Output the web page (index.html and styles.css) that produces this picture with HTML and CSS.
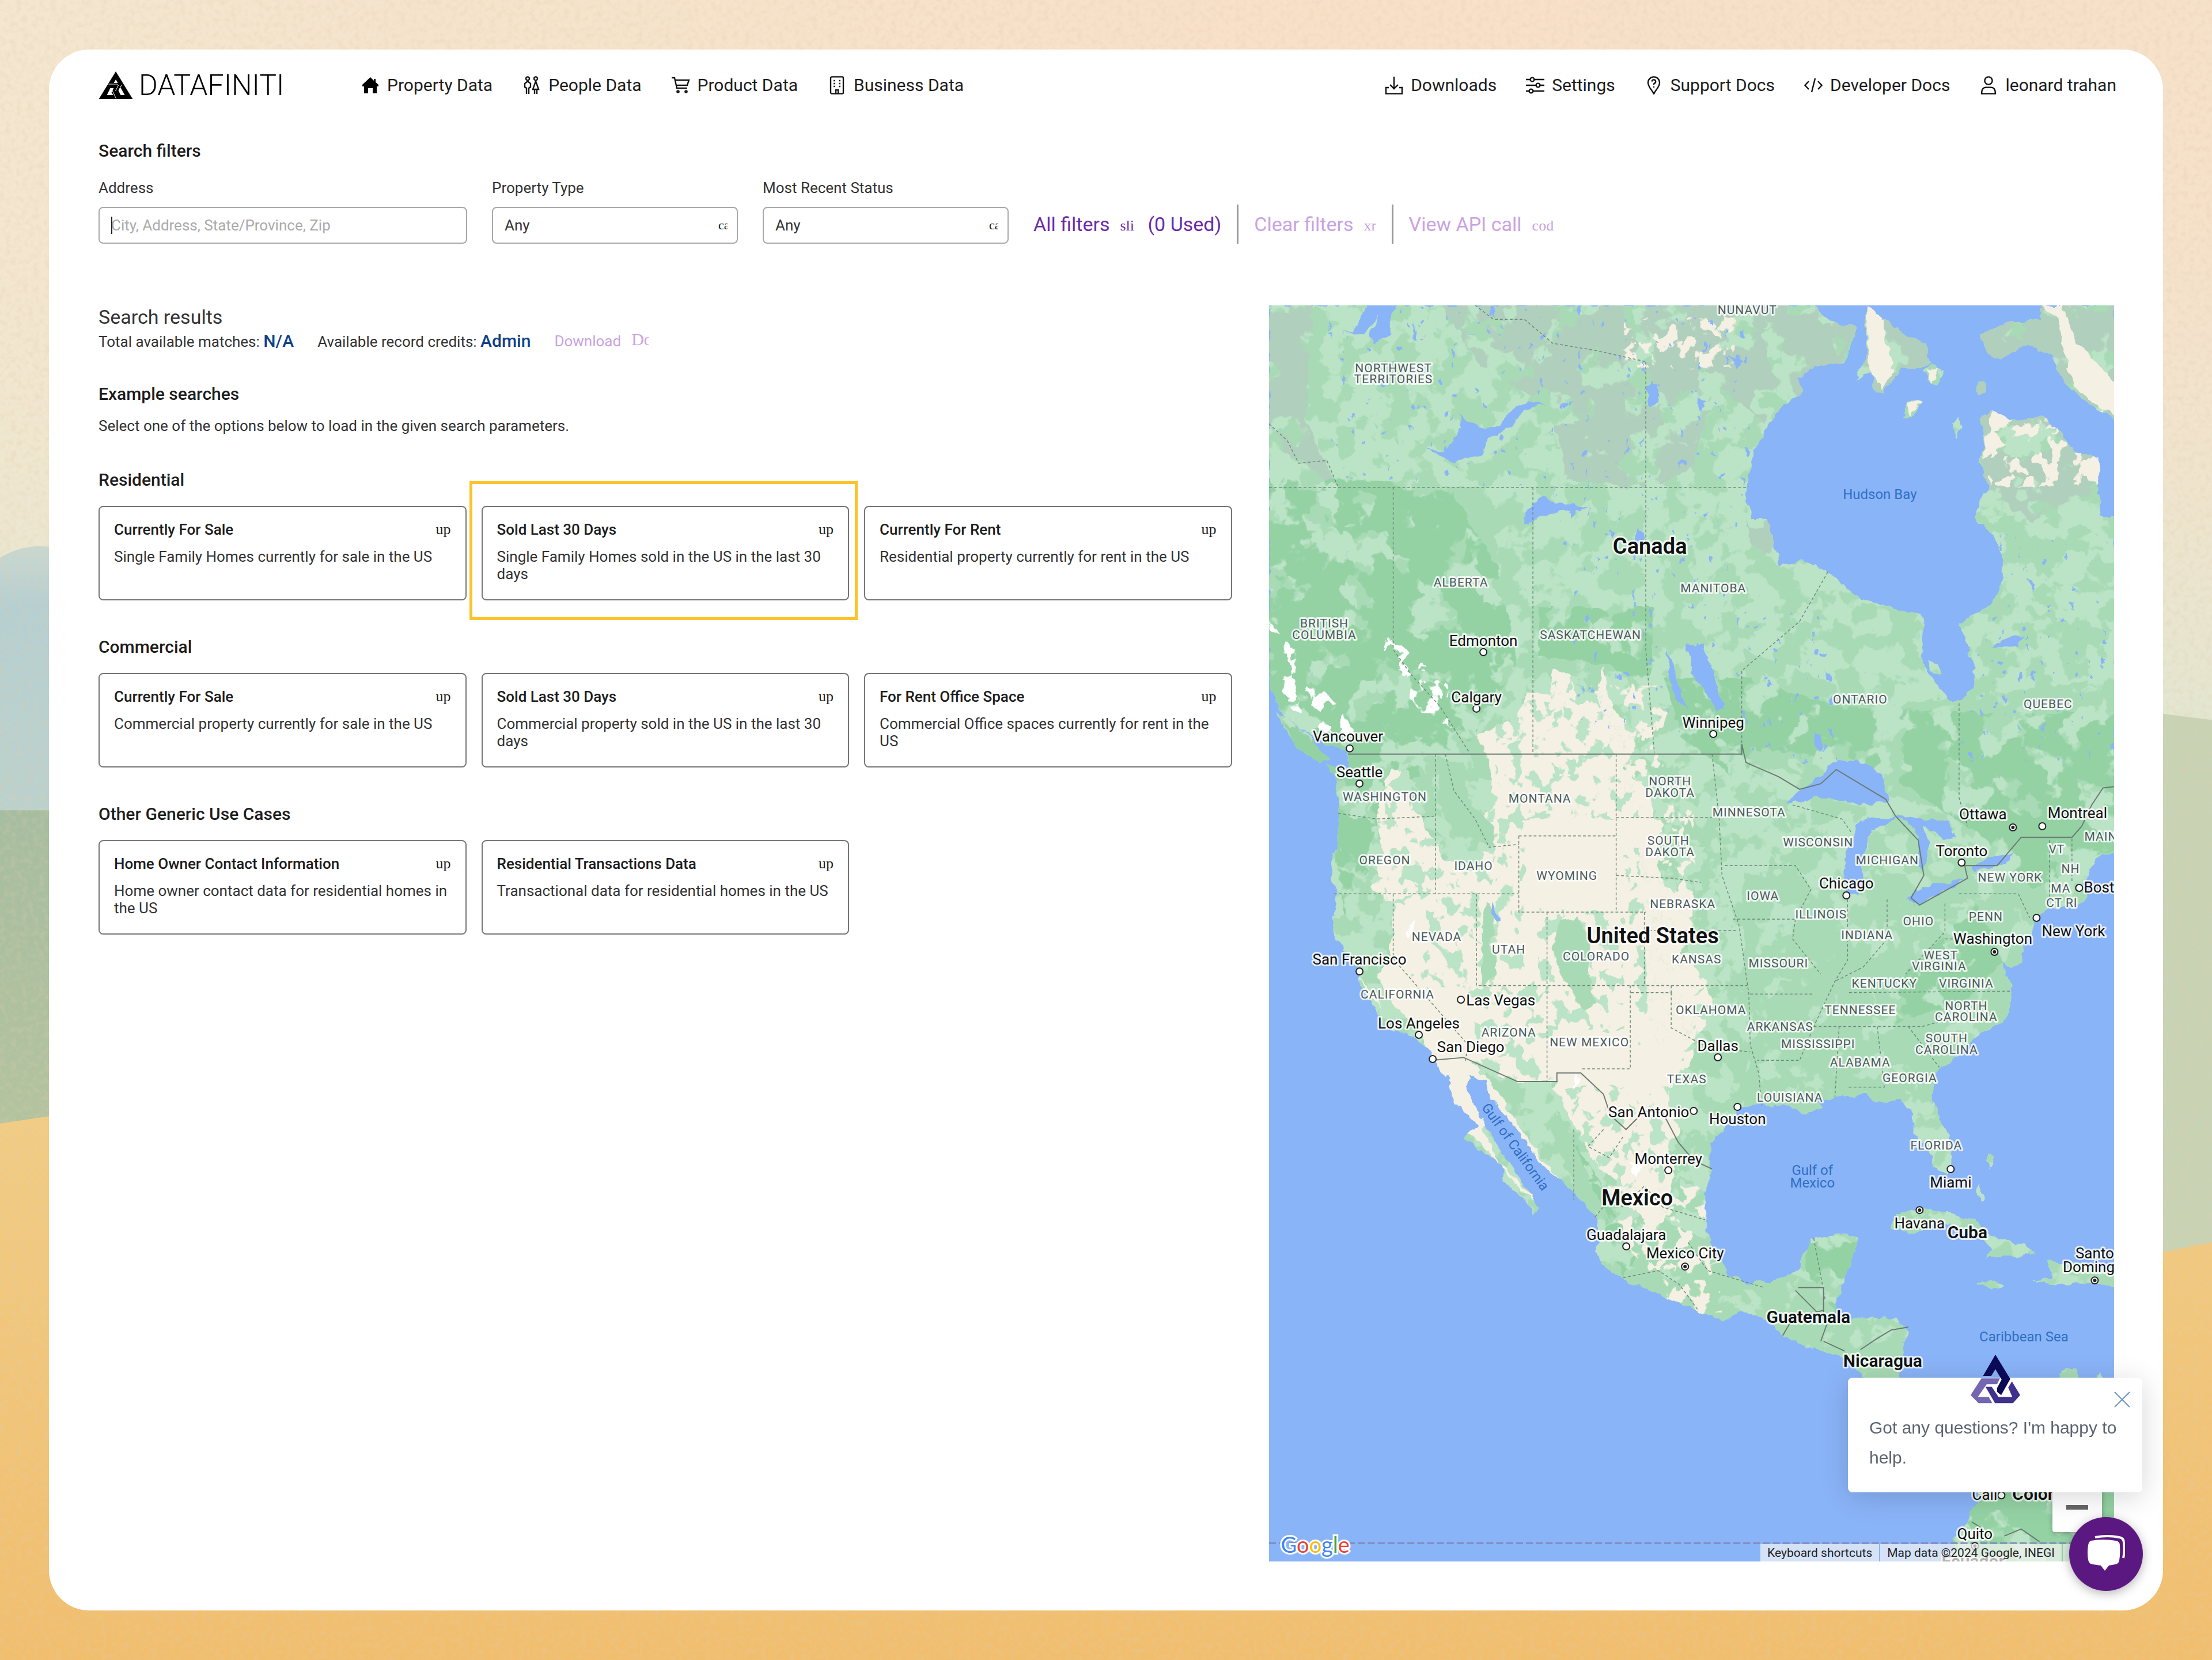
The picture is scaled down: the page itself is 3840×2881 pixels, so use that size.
FILE: index.html
```html
<!DOCTYPE html>
<html lang="en">

<head>
    <meta charset="UTF-8">
    <meta name="viewport" content="width=device-width, initial-scale=1.0">
    <title>Datafiniti - Property Data</title>
    <link rel="stylesheet" href="styles.css">
    <script src="map.js" defer></script>
</head>

<body>
    <!-- Painted backdrop -->
    <svg class="backdrop" viewBox="0 0 1568 1176" preserveAspectRatio="none" aria-hidden="true">
        <defs>
            <linearGradient id="sky" x1="0" x2="1" y1="0" y2="0">
                <stop offset="0" stop-color="#f4e6cf" />
                <stop offset=".6" stop-color="#f8e0c8" />
                <stop offset="1" stop-color="#f6e1ca" />
            </linearGradient>
            <linearGradient id="fade" x1="0" x2="0" y1="0" y2="1">
                <stop offset="0" stop-color="#f0e8d2" stop-opacity="0" />
                <stop offset="1" stop-color="#e3e6d0" />
            </linearGradient>
            <linearGradient id="lake" x1="0" x2="0" y1="0" y2="1">
                <stop offset="0" stop-color="#c9d8d0" />
                <stop offset=".2" stop-color="#b5cfd2" />
                <stop offset="1" stop-color="#bdd2cc" />
            </linearGradient>
            <linearGradient id="hill" x1="0" x2="0" y1="0" y2="1">
                <stop offset="0" stop-color="#a6bda0" />
                <stop offset="1" stop-color="#b3c39f" />
            </linearGradient>
            <linearGradient id="sand" x1="0" x2="0" y1="0" y2="1">
                <stop offset="0" stop-color="#f1cc84" />
                <stop offset="1" stop-color="#f1be6e" />
            </linearGradient>
            <filter id="grain" x="0" y="0" width="1" height="1">
                <feTurbulence type="fractalNoise" baseFrequency=".25" numOctaves="3" seed="4" />
                <feColorMatrix values="0 0 0 0 .75  0 0 0 0 .6  0 0 0 0 .4  .7 0 0 0 -.3" />
            </filter>
        </defs>
        <rect width="1568" height="1176" fill="url(#sky)" />
        <rect y="150" width="1568" height="360" fill="url(#fade)" />
        <path d="M0 395Q18 384 40 388V600H0Z" fill="url(#lake)" />
        <path d="M0 574H40V800H0Z" fill="url(#hill)" />
        <path d="M1528 505L1568 510V900H1528Z" fill="#c8d3b5" />
        <path d="M0 796L40 790L1528 888L1568 880V1176H0Z" fill="url(#sand)" />
        <rect width="1568" height="1176" filter="url(#grain)" />
    </svg>

    <div class="page">
        <header class="header">
            <a href="#" class="logo">
                <svg viewBox="0 0 59 48" aria-hidden="true">
                    <path d="M29.500 0L59 48H0Z" />
                    <path class="cut" d="M29.500 14L26 20H33Z M14 41L20 29H26L22 36L25 41Z M34 33L38 41H45L39 30L37 28Z" />
                    <path class="slit" d="M17 22H31L34 24L29 34M22 30L30 47M40 23L35 32" />
                </svg>
                <span>DATAFINITI</span>
            </a>
            <nav class="nav">
                <a href="#">
                    <svg class="solid" viewBox="0 0 16 16"><path d="M8 1L1 7.500V9H2.500V15H6V10.500H10V15H13.500V9H15V7.500L12.500 5.200V2.500H11V4Z" /></svg>
                    Property Data
                </a>
                <a href="#">
                    <svg viewBox="0 0 16 16"><circle cx="4.500" cy="2.200" r="1.500" /><circle cx="11.500" cy="2.200" r="1.500" /><path d="M4.500 4.500L2 6.500V9.500L3.500 10.500V15.500M4.500 4.500L7 6.500V9.500L5.500 10.500V15.500M11.500 4.500L9 11.500H14L11.500 4.500M10.500 11.500V15.500M12.500 11.500V15.500" /></svg>
                    People Data
                </a>
                <a href="#">
                    <svg viewBox="0 0 16 16"><path d="M0 1.500H2.500L4.500 10.500H13.500M3 3.500H15L13.500 8H4" /><circle cx="5.500" cy="13.500" r=".8" /><circle cx="12.500" cy="13.500" r=".8" /></svg>
                    Product Data
                </a>
                <a href="#">
                    <svg viewBox="0 0 16 16"><rect x="2.500" y=".7" width="11" height="14.600" rx="1" /><path d="M7 15V12H9V15M5 4H6.500M9.500 4H11M5 6.500H6.500M9.500 6.500H11M5 9H6.500M9.500 9H11" /></svg>
                    Business Data
                </a>
            </nav>
            <nav class="nav nav-right">
                <a href="#">
                    <svg viewBox="0 0 16 16"><path d="M8 .5V11M4.500 7.500L8 11L11.500 7.500M3.500 10H1V15.300H15V10H12.500" /></svg>
                    Downloads
                </a>
                <a href="#">
                    <svg viewBox="0 0 16 16"><path d="M0 3H4M7 3H16M0 8H9M12 8H16M0 13H3M6 13H16" /><circle cx="5.500" cy="3" r="1.700" /><circle cx="10.500" cy="8" r="1.700" /><circle cx="4.500" cy="13" r="1.700" /></svg>
                    Settings
                </a>
                <a href="#">
                    <svg viewBox="0 0 16 16"><path d="M8 15.500C6.500 12 3 9.500 3 5.700A5 5 0 0 1 13 5.700C13 9.500 9.500 12 8 15.500ZM6.400 4.800A1.600 1.600 0 1 1 8.500 6.300Q8 6.600 8 7.500M8 9V10" /></svg>
                    Support Docs
                </a>
                <a href="#">
                    <svg viewBox="0 0 16 16"><path d="M4 4.500L.7 8L4 11.500M12 4.500L15.300 8L12 11.500M9.500 2L6.500 14" /></svg>
                    Developer Docs
                </a>
                <a href="#">
                    <svg viewBox="0 0 16 16"><circle cx="8" cy="4" r="3.300" /><path d="M2 15.300C2 11 4 9.800 6 9.800H10C12 9.800 14 11 14 15.300Z" /></svg>
                    leonard trahan
                </a>
            </nav>
        </header>

        <!-- Filters -->
        <section class="filters">
            <h2>Search filters</h2>
            <div class="filter-row">
                <div class="field field-wide">
                    <label for="address">Address</label>
                    <input type="text" id="address" placeholder="City, Address, State/Province, Zip" autocomplete="off">
                </div>
                <div class="field">
                    <label for="propertyType">Property Type</label>
                    <div class="select">
                        <select id="propertyType"><option>Any</option></select>
                        <span class="caret">ca</span>
                    </div>
                </div>
                <div class="field">
                    <label for="status">Most Recent Status</label>
                    <div class="select">
                        <select id="status"><option>Any</option></select>
                        <span class="caret">ca</span>
                    </div>
                </div>
                <div class="filter-actions">
                    <button type="button">All filters <i>sli</i> (0 Used)</button>
                    <button type="button" disabled>Clear filters <i class="narrow">xm</i></button>
                    <button type="button" disabled>View API call <i class="wide">cod</i></button>
                </div>
            </div>
        </section>

        <main class="content">
            <div class="results">
                <h1>Search results</h1>
                <div class="totals">
                    <span>Total available matches: <b>N/A</b></span>
                    <span>Available record credits: <b>Admin</b></span>
                    <button type="button" class="download" disabled>Download <i>Do</i></button>
                </div>

                <h2>Example searches</h2>
                <p class="hint">Select one of the options below to load in the given search parameters.</p>

                <h3>Residential</h3>
                <div class="cards">
                    <a href="#" class="card">
                        <h4>Currently For Sale <i>up</i></h4>
                        <p>Single Family Homes currently for sale in the US</p>
                    </a>
                    <a href="#" class="card highlighted">
                        <h4>Sold Last 30 Days <i>up</i></h4>
                        <p>Single Family Homes sold in the US in the last 30 days</p>
                    </a>
                    <a href="#" class="card">
                        <h4>Currently For Rent <i>up</i></h4>
                        <p>Residential property currently for rent in the US</p>
                    </a>
                </div>

                <h3>Commercial</h3>
                <div class="cards">
                    <a href="#" class="card">
                        <h4>Currently For Sale <i>up</i></h4>
                        <p>Commercial property currently for sale in the US</p>
                    </a>
                    <a href="#" class="card">
                        <h4>Sold Last 30 Days <i>up</i></h4>
                        <p>Commercial property sold in the US in the last 30 days</p>
                    </a>
                    <a href="#" class="card">
                        <h4>For Rent Office Space <i>up</i></h4>
                        <p>Commercial Office spaces currently for rent in the US</p>
                    </a>
                </div>

                <h3>Other Generic Use Cases</h3>
                <div class="cards">
                    <a href="#" class="card">
                        <h4>Home Owner Contact Information <i>up</i></h4>
                        <p>Home owner contact data for residential homes in the US</p>
                    </a>
                    <a href="#" class="card">
                        <h4>Residential Transactions Data <i>up</i></h4>
                        <p>Transactional data for residential homes in the US</p>
                    </a>
                </div>
            </div>

            <!-- Map -->
            <div class="map">
                <svg id="map" viewBox="0 0 1467 2180" preserveAspectRatio="xMidYMid slice">
                    <defs>
                        <clipPath id="land">
                            <path d="M899 216V478L903 497L912 508L925 518L941 528L954 532L956 543L950 546L939 541L945 549L948 569L948 588L943 620L947 635L944 655L950 670L960 683L963 686L963 698L972 709L981 727L1002 735L1014 744L1016 752L1027 766L1031 781L1047 797L1037 806L1051 816L1064 824L1065 838L1080 848L1086 860L1091 855L1083 844L1074 830L1066 818L1056 804L1049 791L1039 772L1041 762L1054 766L1056 779L1068 791L1081 808L1093 826L1107 836L1118 848L1130 862L1134 876L1130 886L1137 898L1153 908L1168 912L1182 920L1203 928L1220 935L1236 929L1251 934L1263 946L1284 955L1307 961L1319 972L1326 990H1347L1347 972L1349 952L1352 942L1342 934L1322 933L1303 934L1299 929L1303 916L1309 898L1315 882L1317 876L1305 874L1284 877L1278 888L1274 900L1261 906L1240 909L1224 902L1214 888L1209 872L1208 846L1213 828L1211 812L1220 800L1234 785L1245 782L1268 783L1278 789L1292 785L1284 779L1299 777L1322 775L1334 781L1346 779L1355 789L1357 803L1367 816L1369 826L1380 832L1383 822L1382 808L1376 796L1371 783L1369 768L1374 756L1392 744L1403 731L1419 724L1425 713L1425 698L1421 692L1418 680L1424 686L1432 682L1434 668L1442 655L1444 647L1453 645L1473 639L1479 635L1476 625L1480 616L1488 606L1499 602V366H1488L1486 345L1488 324L1469 320L1457 303L1446 295L1426 298L1411 291L1403 297L1407 312L1403 328L1409 345L1399 366L1411 378L1419 393L1419 412L1411 428L1388 442L1394 455L1400 480L1394 493L1384 498L1376 491L1363 472L1363 451L1361 435L1338 431L1315 422L1295 405L1276 396L1261 401L1253 368L1241 368L1237 345L1243 318L1255 299L1263 286L1278 276L1274 268L1286 260L1307 256L1315 231L1299 229L1284 216Z" />
                            <path d="M1322 216L1342 232L1365 243L1367 258L1347 262L1334 278L1328 276L1326 264L1315 269L1322 254Z M1446 216V226L1419 229L1403 237L1407 249L1417 254L1434 245L1453 251L1457 262L1469 278L1499 298V216Z" />
                            <path d="M1361 262L1370 258L1377 264L1372 272Z M1348 296L1352 284L1361 283L1357 293Z M1383 300L1387 295L1390 303L1386 311Z M1400 272L1405 271L1408 277L1403 279Z M1366 468L1373 470L1376 478L1368 476Z" />
                            <path d="M903 504L912 508L930 523L941 536L936 541L922 532L910 518Z" />
                            <path d="M1340 870L1342 860L1361 856L1380 859L1399 864L1411 876L1434 881L1441 889L1407 891L1413 884L1399 876L1376 865L1357 873Z M1440 907L1455 905L1450 893L1470 895L1499 900V911L1475 909L1468 911Z M1400 909L1412 907L1420 911L1410 914Z" />
                            <path d="M1402 840L1406 848L1403 851L1400 842Z M1408 817L1412 820L1409 828Z M1458 976L1463 968L1470 970L1472 978Z M1484 980L1487 972L1491 978Z" />
                            <path d="M1398 1040L1403 1062L1396 1072L1390 1085L1383 1092L1384 1107H1499V1040Z" />
                        </clipPath>
                        <filter id="coast" x="0" y="0" width="1" height="1">
                            <feTurbulence type="fractalNoise" baseFrequency=".12" numOctaves="3" seed="3" />
                            <feDisplacementMap in="SourceGraphic" scale="6" xChannelSelector="R" yChannelSelector="G" />
                        </filter>
                        <filter id="patches" x="0" y="0" width="1" height="1">
                            <feTurbulence type="fractalNoise" baseFrequency=".05" numOctaves="4" seed="8" />
                            <feColorMatrix values="0 0 0 0 0  0 0 0 0 0  0 0 0 0 0  24 0 0 0 -12" result="mask" />
                            <feComposite in="SourceGraphic" in2="mask" operator="in" />
                        </filter>
                        <filter id="dense" x="0" y="0" width="1" height="1">
                            <feTurbulence type="fractalNoise" baseFrequency=".04" numOctaves="4" seed="21" />
                            <feColorMatrix values="0 0 0 0 0  0 0 0 0 0  0 0 0 0 0  24 0 0 0 -10" result="mask" />
                            <feComposite in="SourceGraphic" in2="mask" operator="in" />
                        </filter>
                        <filter id="flecks" x="0" y="0" width="1" height="1">
                            <feTurbulence type="fractalNoise" baseFrequency=".1 .08" numOctaves="3" seed="5" />
                            <feColorMatrix values="0 0 0 0 0  0 0 0 0 0  0 0 0 0 0  24 0 0 0 -13" result="mask" />
                            <feComposite in="SourceGraphic" in2="mask" operator="in" />
                        </filter>
                        <filter id="specks" x="0" y="0" width="1" height="1">
                            <feTurbulence type="fractalNoise" baseFrequency=".18 .12" numOctaves="3" seed="14" />
                            <feColorMatrix values="0 0 0 0 0  0 0 0 0 0  0 0 0 0 0  24 0 0 0 -17.500" result="mask" />
                            <feComposite in="SourceGraphic" in2="mask" operator="in" />
                        </filter>
                    </defs>

                    <g transform="scale(2.449) translate(-899 -216)">
                        <g filter="url(#coast)">
                            <rect class="sea" x="889" y="206" width="620" height="910" />
                            <g clip-path="url(#land)">
                                <rect class="base" x="899" y="216" width="600" height="892" />
                                <rect class="mid" x="899" y="216" width="600" height="892" filter="url(#patches)" />
                                <path class="mid" filter="url(#dense)" d="M1235 620H1450V790H1235ZM1170 860L1260 900L1350 930V990L1130 900ZM1236 460L1340 500L1499 480V600L1236 540ZM899 345H1060V500H899Z" />
                                <path class="gray" filter="url(#dense)" d="M1020 216H1320L1300 270L1250 300L1215 270L1200 330L1170 345L1110 340L1100 290L1050 260ZM899 216H930L925 300L945 340L930 350L899 300ZM1235 360L1255 370L1262 400L1240 385ZM1403 290H1480L1488 345L1440 370L1405 345ZM1320 216H1370V280H1320ZM1400 216H1499V300H1400Z" />
                                <path class="dark" filter="url(#dense)" d="M899 340H980L1030 350L1060 400L1075 470L1040 530L985 560L970 600L965 640L955 660L940 560L899 500ZM1090 430H1170V500L1140 470L1090 465ZM1236 480L1300 500L1400 505H1499V600L1440 630L1400 590L1340 550L1290 535L1236 530ZM1180 480H1240V560L1190 520ZM1350 690L1400 640L1420 680L1390 710L1340 725ZM1100 780L1135 860L1150 905L1160 890L1140 850ZM1280 880H1316L1300 930L1280 900ZM1383 1040H1499V1107H1383Z" />
                                <path class="beige" d="M1074 510L1082 490L1098 492L1100 474L1112 478L1118 496L1132 488L1136 472L1140 495L1160 528L1150 545L1168 560L1175 590L1176 625L1195 640L1200 665L1190 675L1207 692L1215 712L1206 730L1195 742L1190 756L1182 775L1190 800L1182 815L1186 830L1178 868L1163 864L1150 840L1128 822L1112 790L1100 770L1103 766H1075L1040 752L1052 760L1072 790L1090 818L1106 836L1090 826L1060 785L1050 800L1060 820L1088 850L1080 845L1040 800L1015 752L1004 725L987 712L975 690L985 680L988 640L972 630L980 600L975 575L985 545L992 545L1000 570L1014 590L1022 610L1050 615L1052 590L1046 580L1060 570L1052 535L1046 520ZM962 690L968 700L980 716L972 702Z" />
                                <path class="beige" d="M1322 216H1335V236L1342 262L1334 276L1324 262ZM1446 216L1458 225L1462 250L1470 275L1499 295V270L1470 240L1462 216ZM1411 291L1430 296L1412 305L1420 315L1405 325ZM1351 285L1361 283L1354 294ZM1364 262H1374L1370 270Z" />
                                <path class="base" filter="url(#flecks)" d="M1000 560H1080V700H1000ZM1060 480H1170V580H1060ZM1090 645H1150V730H1090ZM1040 690H1100V765H1050ZM1150 600H1215V740H1160ZM1110 770H1200V860H1130ZM970 540H1010V640H970Z" />
                                <path class="mid" d="M1104 652L1118 650L1128 668L1125 690L1130 712L1120 716L1112 700L1106 690L1100 672ZM1052 640L1060 645L1056 670L1062 690L1050 698L1050 660ZM1018 536L1036 540L1042 570L1056 580L1060 600L1030 590L1020 570ZM1105 790L1112 800L1128 840L1140 864L1128 856L1110 830L1098 800Z" />
                                <path class="beige" filter="url(#flecks)" d="M1130 485H1180V560H1150ZM1160 560H1200V760H1170ZM1130 840H1220V930H1180ZM1150 225H1230V260H1150ZM1410 290H1490V345H1410Z" />
                                <path class="snow" filter="url(#flecks)" d="M899 440L918 462L930 485L948 498L962 522L940 520L918 504L905 485ZM978 448L1002 464L1026 486L1028 514L1008 504L986 480Z" />
                                <path class="snow" d="M996 660L1001 652L1002 659L997 665ZM1155 822L1163 826L1159 834ZM1115 760L1119 766L1116 772Z" />
                                <path class="sea" filter="url(#specks)" d="M940 216H1240V345H1100L940 340ZM1100 345H1240V520H1120ZM1240 420L1300 440V540H1240ZM1390 380H1499V540H1390Z" />
                                <path class="sea" d="M1265 569L1278 557L1292 549L1301 537L1322 540L1334 549L1338 567L1326 571L1307 567L1288 565Z M1307 631V608L1315 584L1322 580L1342 578L1338 584L1326 588L1319 608L1320 625L1316 635Z M1342 578L1355 579L1380 582L1385 594L1376 593L1363 584L1367 600L1363 616L1359 612V592L1351 582Z M1351 637L1361 627L1376 626L1394 622L1376 632L1357 641Z M1396 614L1409 607L1427 603L1420 613L1399 617Z" />
                                <path class="sea" d="M1195 457L1207 457L1214 480L1222 503L1216 503L1199 476ZM1181 460L1186 470L1188 485L1196 503L1188 495L1182 478ZM1010 318L1024 320L1030 310L1036 304L1033 293L1045 301L1056 302L1062 303L1070 290L1083 284L1095 286L1080 290L1068 305L1056 310L1049 322L1029 327ZM952 233L958 234L968 216H990L985 224L985 235L975 242L970 238L978 222L966 238ZM1078 370L1084 360L1091 352L1104 356L1126 359L1110 362L1095 364L1082 370ZM1057 640L1062 645L1064 652L1060 653L1057 646ZM1166 273L1174 272L1175 285L1168 288ZM1160 375L1165 376L1162 390L1158 385ZM1285 518L1291 520L1290 532L1285 528ZM1002 228L1004 242L1001 242ZM1224 252L1236 256L1230 260ZM1202 280L1208 284L1206 292ZM1420 452L1434 450L1430 458L1412 458ZM1436 410L1442 414L1440 420Z" />
                            </g>
                        </g>
                        <path class="province" d="M899 345H1237M987 345V460L1000 478L1020 500L1041 533M1086 345V533M1166 256V460L1172 533M1045 216L1058 226H1080L1100 243L1130 248L1166 256M1295 405L1275 440L1234 475V527M899 300L912 312L920 328L940 326L948 345M1388 498V565L1394 585M948 576L975 580L1017 578M1017 534V633M945 633H1076M1076 592V646H1166M1076 592H1145M1145 534V646M1024 534L1030 560L1045 580L1055 600L1076 598M987 633V679L1040 740L1038 752M1046 633V698H1238M1096 646V766M1155 698V757H1120M1165 646V698M1145 579H1217M1145 620L1185 622L1205 625M1165 659H1230M1213 534L1218 580L1220 620L1232 655L1239 704L1240 740L1246 760L1248 783M1222 613H1272L1283 630L1272 651H1228M1240 704H1285M1184 698V703H1155M1184 703V728L1210 742L1240 745M1310 703L1425 702M1309 637V680L1300 695L1285 727L1275 751H1245M1337 637V665L1320 685L1300 695M1378 640V660L1350 690M1388 633H1430L1438 650M1378 665H1430M1285 727H1362L1380 722M1303 727L1300 777M1330 727L1335 770H1309M1352 727L1374 756M1272 651L1270 665L1290 690M1270 570L1305 580L1312 590M1468 594V625M1452 595V640M1130 862L1140 850L1150 855L1165 840L1178 855L1208 864M1115 800V850M1136 800L1125 812L1140 820L1150 805M1150 905L1175 900L1190 910L1203 928M1196 880L1210 900L1250 912M1285 877L1293 920" />
                        <path class="border" d="M955 534H1234V527L1237 540L1260 550L1275 559L1290 555L1301 545L1336 566L1343 578L1359 595L1363 620L1354 636L1360 641L1394 622L1392 613L1415 613L1432 593H1468L1475 585L1482 570L1490 558L1499 557M1014 751L1037 749L1075 766H1103V760H1120L1136 775L1141 790L1152 800L1165 787L1178 788L1189 809L1200 822L1213 828M1274 912H1292V934L1272 914M1263 946L1270 934L1292 928M1292 950L1307 957M1318 956L1330 948L1340 942L1352 940M1290 950L1295 936M1397 1078L1405 1083M1420 1088L1432 1083L1445 1092" />
                        <path class="equator" d="M899 1093H1499" />
                    </g>
                    <g id="mapLabels"></g>
                </svg>
                <div class="google"><span>G</span><span>o</span><span>o</span><span>g</span><span>l</span><span>e</span></div>
                <button type="button" class="zoom-out" aria-label="Zoom out"></button>
                <div class="attribution">
                    <a href="#">Keyboard shortcuts</a>
                    <span>Map data ©2024 Google, INEGI</span>
                    <a href="#">Terms</a>
                </div>
            </div>
        </main>
    </div>

    <!-- Chat widget -->
    <div class="chat-popup">
        <svg class="chat-logo" viewBox="0 0 240 252" preserveAspectRatio="none" aria-hidden="true">
            <path fill="#0b0a57" d="M120 0L60 110H100L120 75L150 128L128 172V192L148 208L192 125Z" />
            <path fill="#7566b2" d="M52 122H142L128 152H78L35 218H88L105 250H38L0 208Z" />
            <path fill="#40318c" d="M72 165H102L135 218H202L182 170L200 138L240 208L205 250H118Z" />
        </svg>
        <button type="button" class="chat-close" aria-label="Close">
            <svg viewBox="0 0 28 28"><path d="M1 1L27 27M27 1L1 27" /></svg>
        </button>
        <p>Got any questions? I'm happy to help.</p>
    </div>
    <button type="button" class="chat-button" aria-label="Open chat">
        <svg viewBox="0 0 66 66">
            <path fill="#fff" d="M7 10Q28 6 50 10Q57 11 57 18Q58 32 56 44Q55 50 49 51L38 53L31 62L24 53L10 51Q3 50 2 43Q0 30 2 18Q3 11 7 10Z" />
            <path fill="none" stroke="#fff" stroke-width="4" d="M14 4Q36 0 56 4Q64 5 64 14Q66 28 63 40" />
        </svg>
    </button>
</body>

</html>
```

FILE: styles.css
```css
* {
    box-sizing: border-box;
}

body {
    margin: 0;
    padding: 86px 85px;
    min-height: 100vh;
    display: flex;
    font-family: Roboto, sans-serif;
    font-size: 26px;
    line-height: 40px;
    color: #333;
    background: #f1c67c;
}

h1,
h2,
h3,
h4,
p {
    margin: 0;
}

a {
    color: inherit;
    text-decoration: none;
}

button,
input,
select {
    font: inherit;
    color: inherit;
}

button {
    border: none;
    padding: 0;
    background: none;
    cursor: pointer;
}

i {
    font-family: "Liberation Serif", serif;
    font-style: normal;
    font-weight: 400;
}

h2,
h3 {
    font-size: 30px;
    font-weight: 500;
    color: #1d1d1d;
}

.backdrop {
    position: fixed;
    inset: 0;
    width: 100%;
    height: 100%;
    z-index: -1;
}

.page {
    flex: 1;
    min-width: 0;
    display: flex;
    flex-direction: column;
    padding: 0 85px 85px 86px;
    border-radius: 70px;
    background: #fff;
}

/* Header */
.header {
    display: flex;
    align-items: center;
    height: 124px;
}

.logo {
    display: flex;
    align-items: center;
    gap: 10px;
    width: 456px;
    font-size: 50px;
    font-weight: 300;
    color: #000;
}

.logo svg {
    width: 60px;
    height: 48px;
}

.logo .cut {
    fill: #fff;
}

.logo .slit {
    fill: none;
    stroke: #fff;
    stroke-width: 1;
}

.nav {
    display: flex;
    gap: 52px;
    font-size: 30px;
    color: #1d1d1d;
}

.nav-right {
    gap: 51px;
    margin-left: auto;
    margin-right: -4px;
}

.nav a {
    display: flex;
    align-items: center;
    gap: 13px;
}

.nav svg {
    width: 32px;
    height: 32px;
    fill: none;
    stroke: #111;
    stroke-width: 1.2;
}

.nav .solid {
    fill: #000;
    stroke: none;
}

/* Filters */
.filters {
    margin-top: 32px;
}

.filter-row {
    display: flex;
    align-items: flex-end;
    gap: 43px;
    margin-top: 24px;
}

.field {
    display: flex;
    flex-direction: column;
    gap: 13px;
    width: 427px;
}

.field-wide {
    width: 640px;
}

.field input,
.field select {
    width: 100%;
    height: 64px;
    padding: 0 20px;
    border: 2px solid #a9a9a9;
    border-radius: 8px;
    background: #fff;
    appearance: none;
    color: #333;
}

.field input {
    background: linear-gradient(#222, #222) 20px 50% / 2px 30px no-repeat #fff;
}

.field input::placeholder {
    color: #aaa;
    opacity: 1;
}

.select {
    position: relative;
    display: flex;
}

.caret {
    position: absolute;
    right: 18px;
    top: 12px;
    width: 16px;
    overflow: hidden;
    font-family: "Liberation Serif", serif;
    font-size: 22px;
    color: #111;
    pointer-events: none;
}

.filter-actions {
    display: flex;
    height: 68px;
    font-size: 34px;
    color: #6a2aa8;
}

.filter-actions button {
    display: flex;
    align-items: center;
    gap: 18px;
    white-space: nowrap;
}

.filter-actions button + button {
    margin-left: 27px;
    padding-left: 27px;
    border-left: 3px solid #999;
}

.filter-actions i {
    padding-top: 6px;
    width: 30px;
    overflow: hidden;
    font-size: 26px;
    text-align: left;
}

.filter-actions .narrow {
    width: 21px;
}

.filter-actions .wide {
    width: 38px;
}

button:disabled {
    color: #c9a2e2;
}

/* Results */
.content {
    flex: 1;
    display: grid;
    grid-template-columns: 1967fr 1467fr;
    gap: 64px;
    margin-top: 107px;
}

.results {
    min-width: 0;
}

.results h1 {
    font-size: 34px;
    font-weight: 400;
}

.totals {
    display: flex;
    gap: 41px;
    margin: 2px 0 51px;
}

.totals b {
    font-size: 30px;
    font-weight: 500;
    color: #0d4289;
}

.download {
    display: flex;
    gap: 18px;
}

.download i {
    width: 30px;
    overflow: hidden;
    font-size: 30px;
    line-height: 34px;
}

.hint {
    margin-top: 15px;
}

.results h3 {
    margin: 61px 0 25px;
}

.hint + h3 {
    margin-top: 54px;
}

.cards {
    display: grid;
    grid-template-columns: repeat(3, 1fr);
    gap: 26px;
}

.card {
    position: relative;
    min-height: 164px;
    padding: 21px 25px;
    border: 2px solid #757575;
    border-radius: 8px;
}

.card h4 {
    display: flex;
    justify-content: space-between;
    margin-bottom: 14px;
    font-size: 26px;
    font-weight: 500;
    line-height: 36px;
    color: #1d1d1d;
}

.card p {
    line-height: 30px;
}

.highlighted::after {
    content: "";
    position: absolute;
    inset: -45px -17px -36px -23px;
    border: 5px solid #fac42d;
}

/* Map */
.map {
    position: relative;
    overflow: hidden;
    background: #8ab4f8;
}

#map {
    position: absolute;
    width: 100%;
    height: 100%;
}

.sea {
    fill: #8ab4f8;
}

.base {
    fill: #bbe3c6;
}

.mid {
    fill: #a8dbb5;
}

.dark {
    fill: #94d2a4;
}

.gray {
    fill: #b0cfbc;
}

.beige {
    fill: #f5f0e4;
}

.snow {
    fill: #fff;
}

.province,
.border,
.equator {
    fill: none;
    stroke: #6f8a7c;
    stroke-width: .6;
}

.province {
    stroke-dasharray: 2 1.5;
}

.border {
    stroke: #6c7a74;
    stroke-width: .8;
}

.equator {
    stroke: #7f86b8;
    stroke-width: 1;
    stroke-dasharray: 5 2;
}

#mapLabels text {
    text-anchor: middle;
    paint-order: stroke;
    stroke: #fff;
    stroke-opacity: .8;
    stroke-width: 6px;
    stroke-linejoin: round;
    fill: #111;
    font-size: 26px;
}

#mapLabels .state {
    font-size: 21px;
    letter-spacing: 1px;
    fill: #4c5a5c;
}

#mapLabels .country {
    font-size: 38px;
    font-weight: 600;
}

#mapLabels .small-country {
    font-size: 30px;
    font-weight: 600;
}

#mapLabels .water {
    font-size: 24px;
    fill: #2f6fc4;
    stroke: none;
}

#mapLabels circle {
    fill: #fff;
    stroke: #222;
    stroke-width: 2;
}

#mapLabels .capital {
    fill: #222;
    stroke: none;
}

.google {
    position: absolute;
    left: 21px;
    bottom: 10px;
    font-family: Lato, sans-serif;
    font-size: 38px;
    -webkit-text-stroke: 6px #fff;
    paint-order: stroke;
    color: #4285f4;
}

.google span:nth-child(2),
.google span:nth-child(6) {
    color: #ea4335;
}

.google span:nth-child(3) {
    color: #fbbc05;
}

.google span:nth-child(5) {
    color: #34a853;
}

.zoom-out {
    position: absolute;
    right: 21px;
    bottom: 51px;
    width: 86px;
    height: 86px;
    border-radius: 4px;
    background: linear-gradient(#666, #666) 50% 50% / 38px 8px no-repeat #fff;
    box-shadow: 0 2px 8px rgba(0, 0, 0, 0.3);
}

.attribution {
    position: absolute;
    right: 0;
    bottom: 0;
    display: flex;
    font-size: 21px;
    line-height: 30px;
    color: #222;
}

.attribution > * {
    padding: 0 12px;
    margin-left: 2px;
    background: rgba(245, 245, 245, 0.7);
}

.attribution > :last-child {
    padding-right: 18px;
}

/* Chat */
.chat-popup {
    position: fixed;
    right: 121px;
    bottom: 291px;
    width: 511px;
    height: 199px;
    padding: 61px 30px 0 37px;
    border-radius: 8px;
    background: #fff;
    box-shadow: 0 8px 50px rgba(0, 0, 0, 0.16);
    font-family: "Liberation Sans", sans-serif;
    font-size: 30px;
    line-height: 52px;
    color: #5c6470;
}

.chat-logo {
    position: absolute;
    left: 213px;
    top: -40px;
    width: 86px;
    height: 85px;
}

.chat-close {
    position: absolute;
    right: 21px;
    top: 24px;
    width: 28px;
    height: 28px;
    line-height: 0;
}

.chat-close svg {
    stroke: #6f97bd;
    stroke-width: 2;
}

.chat-button {
    position: fixed;
    right: 120px;
    bottom: 120px;
    width: 128px;
    height: 128px;
    display: flex;
    align-items: center;
    justify-content: center;
    border-radius: 50%;
    background: #5b1881;
    box-shadow: 0 4px 18px rgba(0, 0, 0, 0.3);
}

.chat-button svg {
    width: 66px;
    height: 66px;
}
```

FILE: map.js
```js
// name, x, y, kind
const labels = [
    ['NUNAVUT', 1238, 219, 'state'],
    ['NORTHWEST', 987, 260, 'state'],
    ['TERRITORIES', 987, 268, 'state'],
    ['Hudson Bay', 1332, 350, 'water'],
    ['Canada', 1169, 387, 'country'],
    ['ALBERTA', 1035, 412, 'state'],
    ['MANITOBA', 1214, 416, 'state'],
    ['BRITISH', 938, 441, 'state'],
    ['COLUMBIA', 938, 449, 'state'],
    ['SASKATCHEWAN', 1127, 449, 'state'],
    ['Edmonton', 1051, 454, 'city'],
    ['Calgary', 1046, 494, 'city'],
    ['ONTARIO', 1318, 495, 'state'],
    ['QUEBEC', 1451, 498, 'state'],
    ['Winnipeg', 1214, 512, 'city'],
    ['Vancouver', 955, 522, 'city'],
    ['Seattle', 963, 547, 'city'],
    ['WASHINGTON', 981, 564, 'state'],
    ['MONTANA', 1091, 565, 'state'],
    ['NORTH', 1183, 553, 'state'],
    ['DAKOTA', 1183, 561, 'state'],
    ['MINNESOTA', 1239, 575, 'state'],
    ['Ottawa', 1405, 577, 'city'],
    ['Montreal', 1472, 576, 'city'],
    ['MAINE', 1491, 592, 'state'],
    ['SOUTH', 1182, 595, 'state'],
    ['DAKOTA', 1183, 603, 'state'],
    ['WISCONSIN', 1288, 596, 'state'],
    ['VT', 1457, 601, 'state'],
    ['Toronto', 1390, 603, 'city'],
    ['OREGON', 981, 609, 'state'],
    ['IDAHO', 1044, 613, 'state'],
    ['MICHIGAN', 1337, 609, 'state'],
    ['NH', 1467, 615, 'state'],
    ['WYOMING', 1110, 620, 'state'],
    ['NEW YORK', 1424, 621, 'state'],
    ['Chicago', 1308, 626, 'city'],
    ['MA', 1460, 629, 'state'],
    ['Boston', 1493, 629, 'city'],
    ['IOWA', 1249, 634, 'state'],
    ['CT RI', 1461, 639, 'state'],
    ['NEBRASKA', 1192, 640, 'state'],
    ['ILLINOIS', 1290, 647, 'state'],
    ['OHIO', 1359, 652, 'state'],
    ['PENN', 1407, 649, 'state'],
    ['INDIANA', 1323, 662, 'state'],
    ['United States', 1171, 663, 'country'],
    ['Washington', 1412, 665, 'city'],
    ['New York', 1469, 660, 'city'],
    ['NEVADA', 1018, 663, 'state'],
    ['UTAH', 1069, 672, 'state'],
    ['COLORADO', 1131, 677, 'state'],
    ['KANSAS', 1202, 679, 'state'],
    ['MISSOURI', 1260, 682, 'state'],
    ['WEST', 1375, 676, 'state'],
    ['VIRGINIA', 1374, 684, 'state'],
    ['San Francisco', 963, 680, 'city'],
    ['KENTUCKY', 1335, 696, 'state'],
    ['VIRGINIA', 1393, 696, 'state'],
    ['CALIFORNIA', 990, 704, 'state'],
    ['Las Vegas', 1063, 709, 'city'],
    ['OKLAHOMA', 1212, 715, 'state'],
    ['TENNESSEE', 1318, 715, 'state'],
    ['NORTH', 1393, 712, 'state'],
    ['CAROLINA', 1393, 720, 'state'],
    ['Los Angeles', 1005, 725, 'city'],
    ['ARKANSAS', 1261, 727, 'state'],
    ['ARIZONA', 1069, 731, 'state'],
    ['NEW MEXICO', 1126, 738, 'state'],
    ['MISSISSIPPI', 1288, 739, 'state'],
    ['San Diego', 1042, 742, 'city'],
    ['Dallas', 1217, 741, 'city'],
    ['SOUTH', 1379, 735, 'state'],
    ['CAROLINA', 1379, 743, 'state'],
    ['ALABAMA', 1318, 752, 'state'],
    ['TEXAS', 1195, 764, 'state'],
    ['GEORGIA', 1353, 763, 'state'],
    ['LOUISIANA', 1268, 777, 'state'],
    ['San Antonio', 1168, 788, 'city'],
    ['Houston', 1231, 793, 'city'],
    ['FLORIDA', 1372, 811, 'state'],
    ['Monterrey', 1182, 821, 'city'],
    ['Gulf of', 1284, 829, 'water'],
    ['Mexico', 1284, 838, 'water'],
    ['Miami', 1382, 838, 'city'],
    ['Mexico', 1160, 849, 'country'],
    ['Havana', 1360, 867, 'city'],
    ['Cuba', 1394, 874, 'small-country'],
    ['Guadalajara', 1152, 875, 'city'],
    ['Mexico City', 1194, 888, 'city'],
    ['Santo', 1484, 888, 'city'],
    ['Domingo', 1483, 898, 'city'],
    ['Guatemala', 1281, 934, 'small-country'],
    ['Caribbean Sea', 1434, 947, 'water'],
    ['Nicaragua', 1334, 965, 'small-country'],
    ['Cali', 1406, 1059, 'city'],
    ['Colombia', 1452, 1059, 'small-country'],
    ['Quito', 1399, 1087, 'city'],
    ['Ecuador', 1398, 1107, 'small-country']
];

const towns = [
    [1051, 462], [1046, 502], [1214, 520], [956, 530], [963, 555], [1447, 585], [1390, 611],
    [1308, 634], [1473, 629], [1443, 650], [963, 688], [1035, 708], [1005, 733], [1015, 750],
    [1217, 749], [1200, 787], [1231, 784], [1182, 829], [1382, 828], [1152, 883], [1418, 1059]
];

const capitals = [[1426, 586], [1413, 674], [1360, 857], [1194, 897], [1484, 907], [1399, 1095]];

const SCALE = 2.449;
const layer = document.getElementById('mapLabels');

function project(x, y) {
    return [Math.round((x - 899) * SCALE), Math.round((y - 216) * SCALE)];
}

function add(name, attrs, text) {
    const el = document.createElementNS('http://www.w3.org/2000/svg', name);
    for (const key in attrs) {
        el.setAttribute(key, attrs[key]);
    }
    if (text) {
        el.textContent = text;
    }
    layer.appendChild(el);
}

towns.concat(capitals).forEach(([x, y]) => {
    const [cx, cy] = project(x, y);
    add('circle', { cx, cy, r: 6 });
});

capitals.forEach(([x, y]) => {
    const [cx, cy] = project(x, y);
    add('circle', { cx, cy, r: 3, class: 'capital' });
});

labels.forEach(([text, lx, ly, kind]) => {
    const [x, y] = project(lx, ly);
    add('text', { x, y: y + (kind === 'country' ? 12 : 8), class: kind }, text);
});

// Gulf of California runs along the coast
const [gx, gy] = project(1071, 814);
add('text', { x: gx, y: gy, class: 'water', transform: `rotate(54 ${gx} ${gy})` }, 'Gulf of California');
```
